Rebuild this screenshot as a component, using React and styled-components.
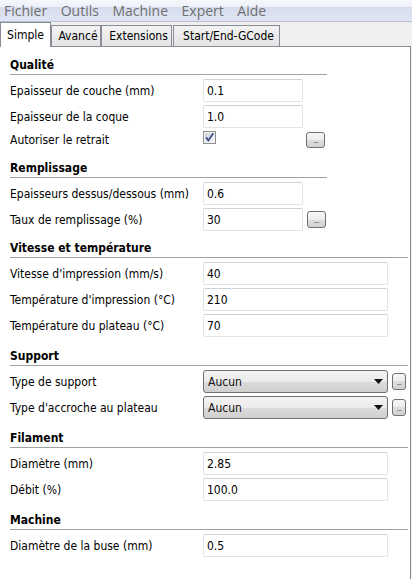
import React from 'react';
import styled, { createGlobalStyle } from 'styled-components';

const GlobalStyle = createGlobalStyle`
  html, body {
    margin: 0;
    padding: 0;
    background: #f0f0f0;
  }
  body {
    font-family: "DejaVu Sans Condensed", "DejaVu Sans", sans-serif;
    font-size: 12px;
    color: #000;
  }
`;

const Window = styled.div`
  height: 579px;
  display: flex;
  flex-direction: column;
  overflow: hidden;
`;

const MenuBar = styled.div`
  height: 21px;
  border-bottom: 1px solid #b8bfd0;
  background: linear-gradient(#f5f7fb 0, #eef1f8 7px, #d7ddef 7px, #dfe5f3 21px);
  display: flex;
  align-items: center;
  gap: 13.5px;
  padding-left: 4px;
`;

const MenuItem = styled.span`
  font-family: "Open Sans", "Noto Sans", sans-serif;
  font-size: 14px;
  line-height: 22px;
  color: #6f6f6f;
`;

const TabStrip = styled.div`
  height: 24px;
  display: flex;
  align-items: flex-end;
`;

const Tab = styled.div`
  box-sizing: border-box;
  width: ${p => p.$w}px;
  margin-left: ${p => p.$ml || 0}px;
  height: ${p => (p.$active ? 25 : 21)}px;
  margin-bottom: ${p => (p.$active ? -1 : 0)}px;
  position: relative;
  z-index: ${p => (p.$active ? 1 : 0)};
  border: 1px solid #898c95;
  border-bottom: none;
  background: ${p => (p.$active ? '#fff' : 'linear-gradient(#f3f3f3, #e4e4e4)')};
  display: flex;
  align-items: flex-end;
  justify-content: center;
  padding: 0 ${p => (p.$active ? 4 : 0)}px ${p => (p.$active ? 4 : 2)}px 4px;
  line-height: 16px;
  white-space: nowrap;
`;

const Panel = styled.div`
  flex: 1;
  box-sizing: border-box;
  width: 411px;
  background: #fff;
  border-top: 1px solid #898c95;
  border-right: 1px solid #898c95;
  padding: 10px 0 0 10px;
  display: flex;
  flex-direction: column;
`;

const Section = styled.section`
  margin-top: ${p => p.$space}px;
  display: flex;
  flex-direction: column;
  gap: 3px;
`;

const Heading = styled.div`
  width: ${p => (p.$wide ? 398 : 317)}px;
  font-weight: bold;
  line-height: 16px;
  padding-bottom: 1px;
  border-bottom: 1px solid #a0a0a0;
  margin-bottom: 1px;
`;

const Row = styled.div`
  display: grid;
  grid-template-columns: 193px auto;
  align-items: center;
  height: ${p => p.$h || 23}px;
`;

const Label = styled.span`
  line-height: 16px;
  white-space: nowrap;
`;

const Field = styled.div`
  display: flex;
  align-items: center;
  gap: ${p => p.$gap || 4}px;
`;

const TextBox = styled.input`
  box-sizing: border-box;
  width: ${p => (p.$wide ? 185 : 100)}px;
  height: 23px;
  margin: 0;
  padding: 0 0 0 3px;
  border: 1px solid #e0e4e9;
  border-top-color: #cdd1d8;
  border-radius: 2px;
  font: inherit;
  color: #000;
  background: #fff;
  outline: none;
`;

const DotsButton = styled.div`
  box-sizing: border-box;
  width: ${p => (p.$narrow ? 14 : 19)}px;
  height: ${p => p.$h || 16}px;
  margin-top: ${p => p.$mt || 0}px;
  border: 1px solid #707070;
  border-radius: 3px;
  background: linear-gradient(#f6f6f6, #ececec 50%, #dddddd 50%, #d2d2d2);
  display: flex;
  align-items: center;
  justify-content: center;
  font-size: 7px;
  line-height: 7px;
  padding-top: 3px;
  color: #222;
  letter-spacing: -0.5px;
`;

const CheckBox = styled.div`
  width: 13px;
  height: 13px;
  align-self: flex-start;
`;

const SelectBox = styled.div`
  box-sizing: border-box;
  width: 185px;
  height: 23px;
  border: 1px solid #707070;
  border-radius: 3px;
  background: linear-gradient(#f4f4f4, #ebebeb 50%, #dddddd 50%, #cfcfcf);
  display: flex;
  align-items: center;
  justify-content: space-between;
  padding: 0 4px;
  line-height: 16px;
  color: #111;
`;

const Caret = () => (
  <svg width="9" height="5" viewBox="0 0 9 5">
    <path d="M0 0 H9 L4.5 5 Z" fill="#111" />
  </svg>
);

const Check = () => (
  <CheckBox>
    <svg width="13" height="13" viewBox="0 0 13 13">
      <defs>
        <linearGradient id="cb" x1="0" y1="0" x2="1" y2="1">
          <stop offset="0" stopColor="#cfd3da" />
          <stop offset="1" stopColor="#f5f6f8" />
        </linearGradient>
      </defs>
      <rect x="0.5" y="0.5" width="12" height="12" fill="#f4f4f4" stroke="#8e8f8f" />
      <rect x="2" y="2" width="9" height="9" fill="url(#cb)" />
      <path d="M3 6.2 L5.3 9.4 L10.3 2.2" fill="none" stroke="#3f5283" strokeWidth="1.8" />
    </svg>
  </CheckBox>
);

const Dots = props => <DotsButton {...props}>...</DotsButton>;

const Input = ({ label, value, wide }) => (
  <Row>
    <Label>{label}</Label>
    <Field>
      <TextBox $wide={wide} defaultValue={value} readOnly />
    </Field>
  </Row>
);

const Select = ({ label }) => (
  <Row>
    <Label>{label}</Label>
    <Field>
      <SelectBox>
        Aucun
        <Caret />
      </SelectBox>
      <Dots $narrow $h={17} />
    </Field>
  </Row>
);

const menus = ['Fichier', 'Outils', 'Machine', 'Expert', 'Aide'];

export default function App() {
  return (
    <Window>
      <GlobalStyle />
      <MenuBar>
        {menus.map(m => (
          <MenuItem key={m}>{m}</MenuItem>
        ))}
      </MenuBar>
      <TabStrip>
        <Tab $active $w={51}>Simple</Tab>
        <Tab $w={50}>Avancé</Tab>
        <Tab $w={71}>Extensions</Tab>
        <Tab $w={107} $ml={1}>Start/End-GCode</Tab>
      </TabStrip>
      <Panel>
        <Section $space={0}>
          <Heading>Qualité</Heading>
          <Input label="Epaisseur de couche (mm)" value="0.1" />
          <Input label="Epaisseur de la coque" value="1.0" />
          <Row $h={17}>
            <Label>Autoriser le retrait</Label>
            <Field $gap={90}>
              <Check />
              <Dots $mt={1} />
            </Field>
          </Row>
        </Section>

        <Section $space={12}>
          <Heading>Remplissage</Heading>
          <Input label="Epaisseurs dessus/dessous (mm)" value="0.6" />
          <Row>
            <Label>Taux de remplissage (%)</Label>
            <Field>
              <TextBox defaultValue="30" readOnly />
              <Dots $h={17} />
            </Field>
          </Row>
        </Section>

        <Section $space={9}>
          <Heading $wide>Vitesse et température</Heading>
          <Input wide label="Vitesse d'impression (mm/s)" value="40" />
          <Input wide label="Température d'impression (°C)" value="210" />
          <Input wide label="Température du plateau (°C)" value="70" />
        </Section>

        <Section $space={11}>
          <Heading $wide>Support</Heading>
          <Select label="Type de support" />
          <Select label="Type d'accroche au plateau" />
        </Section>

        <Section $space={11}>
          <Heading $wide>Filament</Heading>
          <Input wide label="Diamètre (mm)" value="2.85" />
          <Input wide label="Débit (%)" value="100.0" />
        </Section>

        <Section $space={11}>
          <Heading $wide>Machine</Heading>
          <Input wide label="Diamètre de la buse (mm)" value="0.5" />
        </Section>
      </Panel>
    </Window>
  );
}
